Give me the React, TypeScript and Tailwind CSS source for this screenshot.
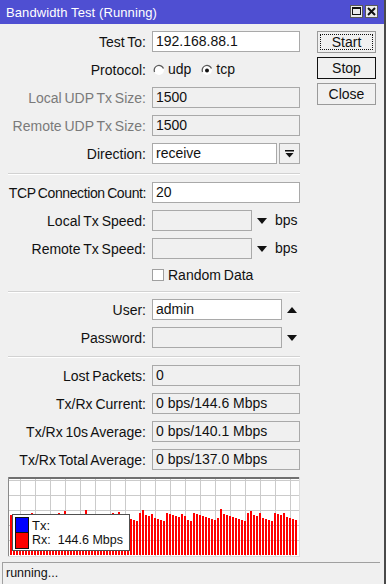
import React from 'react'

const font = { fontFamily: '"Liberation Sans", Arial, sans-serif' }

const bars = Array.from({ length: 96 }, (_, i) => {
  const r = (i * 37 + 11) % 9
  const peak = i % 13 === 5 ? -4 : i % 11 === 3 ? -3 : 0
  return 36 + r + peak
})

function Label({ children, disabled, tight }: { children: React.ReactNode; disabled?: boolean; tight?: boolean }) {
  return (
    <div
      className={`w-[138px] shrink-0 text-right text-[14px] leading-[16px] [word-spacing:-1px] whitespace-nowrap ${
        tight ? 'tracking-[-0.4px]' : ''
      } ${disabled ? 'text-[#7a7a7a]' : 'text-[#111]'}`}
    >
      {children}
    </div>
  )
}

function Field({ value, disabled, className }: { value?: string; disabled?: boolean; className: string }) {
  return (
    <div
      className={`ml-[6px] h-[21px] shrink-0 border border-[#a9a9a9] pl-[3px] flex items-center text-[14px] text-[#111] whitespace-nowrap ${
        disabled ? 'bg-[#f0f0f0]' : 'bg-white'
      } ${className}`}
    >
      {value}
    </div>
  )
}

function Row({
  label,
  children,
  disabled,
  tight,
  top = 'mt-[7px]',
}: {
  label: string
  children: React.ReactNode
  disabled?: boolean
  tight?: boolean
  top?: string
}) {
  return (
    <div className={`${top} h-[21px] flex items-center`}>
      <Label disabled={disabled} tight={tight}>
        {label}
      </Label>
      {children}
    </div>
  )
}

function Tri({ up }: { up?: boolean }) {
  return (
    <svg width="10" height="6" viewBox="0 0 10 6" className="shrink-0">
      {up ? <polygon points="0,6 10,6 5,0" fill="#111" /> : <polygon points="0,0 10,0 5,6" fill="#111" />}
    </svg>
  )
}

function Radio({ checked }: { checked?: boolean }) {
  return (
    <svg width="12" height="12" viewBox="0 0 12 12" className="shrink-0">
      <circle cx="6" cy="6" r="5" fill="#fff" />
      <path d="M1.5 8 A4.8 4.8 0 0 1 10.5 4.5" stroke="#5a5a5a" strokeWidth="1.3" fill="none" />
      {checked && <circle cx="6" cy="6.5" r="2" fill="#111" />}
    </svg>
  )
}

function Sep({ top }: { top: string }) {
  return <div className={`${top} h-[1px] w-[292px] bg-[#d2d2d2] border-b border-white box-content`} />
}

function Graph() {
  const vlines = Array.from({ length: 19 }, (_, k) => 12.5 + 15 * k)
  const hlines = [3.5, 18.5, 33.5, 48.5, 63.5]
  return (
    <div className="relative mt-[7px] w-[292px] h-[80px]">
      <svg width="292" height="80" viewBox="0 0 292 80" className="block" shapeRendering="crispEdges">
        <rect x="0" y="0" width="292" height="80" fill="#fff" />
        {vlines.map((x) => (
          <line key={x} x1={x} y1="2" x2={x} y2="79" stroke="#cbcbcb" strokeWidth="1" />
        ))}
        {hlines.map((y) => (
          <line key={y} x1="1" y1={y} x2="291" y2={y} stroke="#cbcbcb" strokeWidth="1" />
        ))}
        {bars.map((t, i) => (
          <rect key={i} x={2 + 3 * i} y={t} width="2" height={78 - t} fill="#ff0000" />
        ))}
        <rect x="0" y="0" width="292" height="2" fill="#707070" />
        <rect x="0" y="0" width="1" height="80" fill="#8a8a8a" />
        <rect x="291" y="0" width="1" height="80" fill="#dcdcdc" />
        <rect x="0" y="79" width="292" height="1" fill="#dcdcdc" />
      </svg>
      <div className="absolute left-[4px] top-[37px] w-[118px] h-[37px] bg-white border border-[#505050] pl-[2px] pt-[2px]">
        <div className="flex items-center h-[16px]">
          <div className="w-[14px] h-[16px] bg-[#0000ff] border border-[#111]" />
          <span className="ml-[3px] text-[13px] leading-[15px] text-[#111]">Tx:</span>
        </div>
        <div className="flex items-center h-[16px] -mt-[1px]">
          <div className="w-[14px] h-[17px] bg-[#ff0000] border border-[#111]" />
          <span className="ml-[3px] text-[12.5px] leading-[15px] text-[#111] whitespace-pre">Rx:  144.6 Mbps</span>
        </div>
      </div>
    </div>
  )
}

export default function App() {
  return (
    <div style={font} className="w-[386px] h-[584px] bg-[#f0f0f0] border-r-2 border-[#4a4a4a] flex flex-col overflow-hidden">
      <div className="h-[24px] shrink-0 bg-[#4f4fd2] flex items-center justify-between pl-[6px] pr-[6px]">
        <span className="text-white text-[13px] leading-[15px] tracking-[0.1px]">Bandwidth Test (Running)</span>
        <div className="flex gap-[2px] -mt-[2px]">
          <div className="w-[13px] h-[13px] bg-[#ececec] border border-[#5a5a5a] flex items-center justify-center">
            <div className="w-[9px] h-[8px] border border-[#111] border-t-2" />
          </div>
          <div className="w-[13px] h-[13px] bg-[#ececec] border border-[#5a5a5a] flex items-center justify-center">
            <svg width="9" height="9" viewBox="0 0 9 9">
              <path d="M1 1 L8 8 M8 1 L1 8" stroke="#111" strokeWidth="2" />
            </svg>
          </div>
        </div>
      </div>

      <div className="flex">
        <div className="w-[300px] pl-[8px] flex flex-col">
          <Row label="Test To:">
            <Field value="192.168.88.1" className="w-[148px]" />
          </Row>
          <Row label="Protocol:">
            <div className="ml-[7px] flex items-center text-[14px] text-[#111]">
              <Radio />
              <span className="ml-[3px]">udp</span>
              <span className="ml-[10px]">
                <Radio checked />
              </span>
              <span className="ml-[3px]">tcp</span>
            </div>
          </Row>
          <Row label="Local UDP Tx Size:" disabled>
            <Field value="1500" disabled className="w-[148px]" />
          </Row>
          <Row label="Remote UDP Tx Size:" disabled>
            <Field value="1500" disabled className="w-[148px]" />
          </Row>
          <Row label="Direction:">
            <Field value="receive" className="w-[125px]" />
            <div className="ml-[2px] w-[21px] h-[21px] border border-[#a9a9a9] bg-[#f0f0f0] flex items-center justify-center">
              <svg width="9" height="8" viewBox="0 0 9 8">
                <rect x="0" y="0" width="9" height="1.5" fill="#111" />
                <polygon points="0.5,3 8.5,3 4.5,7.5" fill="#111" />
              </svg>
            </div>
          </Row>
          <Sep top="mt-[9px]" />
          <Row label="TCP Connection Count:" tight>
            <Field value="20" className="w-[148px]" />
          </Row>
          <Row label="Local Tx Speed:">
            <Field disabled className="w-[100px]" />
            <span className="ml-[5px]">
              <Tri />
            </span>
            <span className="ml-[8px] text-[14px] text-[#111]">bps</span>
          </Row>
          <Row label="Remote Tx Speed:">
            <Field disabled className="w-[100px]" />
            <span className="ml-[5px]">
              <Tri />
            </span>
            <span className="ml-[8px] text-[14px] text-[#111]">bps</span>
          </Row>
          <div className="mt-[7px] h-[17px] flex items-center pl-[144px]">
            <div className="w-[12px] h-[12px] bg-white border border-[#a0a0a0]" />
            <span className="ml-[4px] text-[14px] leading-[16px] text-[#111] [word-spacing:-1px]">Random Data</span>
          </div>
          <Sep top="mt-[8px]" />
          <Row label="User:" top="mt-[6px]">
            <Field value="admin" className="w-[130px]" />
            <span className="ml-[5px]">
              <Tri up />
            </span>
          </Row>
          <Row label="Password:">
            <Field disabled className="w-[130px]" />
            <span className="ml-[5px]">
              <Tri />
            </span>
          </Row>
          <Sep top="mt-[8px]" />
          <Row label="Lost Packets:">
            <Field value="0" disabled className="w-[148px]" />
          </Row>
          <Row label="Tx/Rx Current:">
            <Field value="0 bps/144.6 Mbps" disabled className="w-[148px]" />
          </Row>
          <Row label="Tx/Rx 10s Average:">
            <Field value="0 bps/140.1 Mbps" disabled className="w-[148px]" />
          </Row>
          <Row label="Tx/Rx Total Average:">
            <Field value="0 bps/137.0 Mbps" disabled className="w-[148px]" />
          </Row>
          <Graph />
        </div>

        <div className="ml-[17px] pt-[7px] flex flex-col gap-[4px]">
          <button className="w-[59px] h-[22px] border border-[#9a9a9a] bg-[#f0f0f0] p-[2px]">
            <div className="w-full h-full border border-dotted border-[#111] flex items-center justify-center text-[14px] text-[#111]">
              Start
            </div>
          </button>
          <button className="w-[59px] h-[22px] border border-[#111] bg-[#f0f0f0] flex items-center justify-center text-[14px] text-[#111]">
            Stop
          </button>
          <button className="w-[59px] h-[22px] border border-[#9a9a9a] bg-[#f0f0f0] flex items-center justify-center text-[14px] text-[#111]">
            Close
          </button>
        </div>
      </div>

      <div className="mt-auto ml-[2px] w-[378px] h-[22px] border-t border-l border-[#a0a0a0] flex items-center pl-[3px] text-[12.5px] text-[#111]">
        running...
      </div>
    </div>
  )
}
